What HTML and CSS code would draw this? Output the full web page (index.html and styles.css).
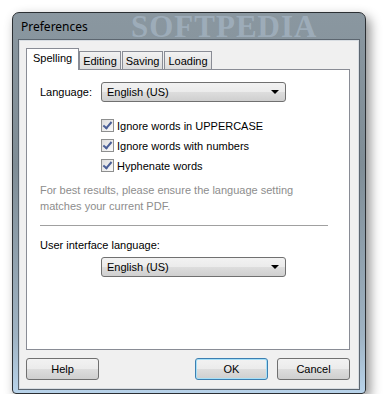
FILE: index.html
```html
<!DOCTYPE html>
<html lang="en">
<head>
    <meta charset="UTF-8">
    <title>Preferences</title>
    <link rel="stylesheet" href="styles.css">
</head>
<body>
    <div class="window">
        <div class="titlebar">
            <span class="title">Preferences</span>
            <span class="watermark">SOFTPEDIA</span>
        </div>
        <div class="client">
            <div class="tabs">
                <div class="tab active">Spelling</div>
                <div class="tab">Editing</div>
                <div class="tab">Saving</div>
                <div class="tab">Loading</div>
            </div>
            <div class="panel">
                <div class="row">
                    <label class="label">Language:</label>
                    <div class="select">English (US)<span class="arrow"></span></div>
                </div>
                <div class="checks">
                    <label class="check"><span class="box"></span>Ignore words in UPPERCASE</label>
                    <label class="check"><span class="box"></span>Ignore words with numbers</label>
                    <label class="check"><span class="box"></span>Hyphenate words</label>
                </div>
                <p class="hint">For best results, please ensure the language setting matches your current PDF.</p>
                <hr class="sep">
                <div class="label2">User interface language:</div>
                <div class="select indent">English (US)<span class="arrow"></span></div>
            </div>
            <div class="buttons">
                <button class="btn">Help</button>
                <span class="spacer"></span>
                <button class="btn default">OK</button>
                <button class="btn">Cancel</button>
            </div>
        </div>
    </div>
</body>
</html>
```

FILE: styles.css
```css
body {
    margin: 0;
    background: #fff;
    font-family: "Liberation Sans", Arial, sans-serif;
    font-size: 11px;
    color: #000;
}
.window {
    margin: 12px 0 0 12px;
    width: 340px;
    height: 376px;
    border: 1px solid #2b2f33;
    border-radius: 7px 7px 4px 4px;
    background: linear-gradient(to bottom, #8a97a0 0%, #7f8d96 40%, #9fb3c3 85%, #b8d3ea 100%);
    box-shadow: 4px 5px 12px rgba(0, 0, 0, 0.45);
    padding: 0 6px 4px 6px;
    display: flex;
    flex-direction: column;
}
.titlebar {
    height: 27px;
    flex-shrink: 0;
    display: flex;
    align-items: center;
    position: relative;
}
.title {
    font-family: "Noto Sans", "DejaVu Sans", sans-serif;
    font-size: 12px;
    padding-left: 2px;
    color: #000;
}
.watermark {
    position: absolute;
    left: 112px;
    top: -4px;
    font-family: "Liberation Serif", serif;
    font-weight: bold;
    font-size: 31px;
    letter-spacing: 1px;
    color: rgba(175, 192, 208, 0.55);
}
.client {
    flex: 1;
    background: #f0f0f0;
    border: 1px solid #d8dde2;
    outline: 1px solid #5c6670;
    padding: 7px 8px 7px 6px;
    display: flex;
    flex-direction: column;
}
.tabs {
    display: flex;
    align-items: flex-end;
    height: 21px;
    flex-shrink: 0;
}
.tab {
    height: 17px;
    padding: 0 3px;
    line-height: 18px;
    border: 1px solid #898c95;
    border-bottom: none;
    background: linear-gradient(to bottom, #f2f2f2, #dcdcdc);
    margin-right: 1px;
}
.tab.active {
    height: 21px;
    line-height: 18px;
    padding: 0 6px;
    background: #fff;
    position: relative;
    top: 1px;
    margin-right: 0;
}
.panel {
    box-sizing: border-box;
    height: 281px;
    flex-shrink: 0;
    border: 1px solid #898c95;
    background: #fff;
    padding: 12px 21px 0 13px;
}
.row {
    display: flex;
    align-items: center;
}
.label {
    width: 61px;
}
.select {
    width: 178px;
    height: 18px;
    border: 1px solid #707070;
    border-radius: 3px;
    background: linear-gradient(to bottom, #f2f2f2 0%, #ebebeb 50%, #dddddd 51%, #cfcfcf 100%);
    line-height: 19px;
    padding-left: 5px;
    position: relative;
}
.arrow {
    position: absolute;
    right: 6px;
    top: 7px;
    border-left: 4px solid transparent;
    border-right: 4px solid transparent;
    border-top: 4px solid #000;
}
.checks {
    margin: 17px 0 0 61px;
    display: flex;
    flex-direction: column;
    gap: 7px;
}
.check {
    display: flex;
    align-items: center;
    height: 13px;
}
.box {
    width: 11px;
    height: 11px;
    border: 1px solid #8e8f8f;
    background: linear-gradient(135deg, #dcdcdc, #fbfbfb);
    margin-right: 3px;
    position: relative;
}
.box::after {
    content: "";
    position: absolute;
    left: 3px;
    top: 0;
    width: 3px;
    height: 7px;
    border: solid #4a5f97;
    border-width: 0 2px 2px 0;
    transform: rotate(40deg);
}
.hint {
    margin: 10px 0 0 0;
    color: #8d8d8d;
    line-height: 16px;
    width: 270px;
}
.sep {
    margin: 11px 0 0 0;
    border: none;
    border-top: 1px solid #a0a0a0;
}
.label2 {
    margin-top: 13px;
}
.select.indent {
    margin: 6px 0 0 61px;
}
.buttons {
    display: flex;
    gap: 9px;
    margin-top: 8px;
}
.spacer {
    flex: 1;
}
.btn {
    width: 73px;
    height: 22px;
    font-family: inherit;
    font-size: 11px;
    border: 1px solid #707070;
    border-radius: 3px;
    background: linear-gradient(to bottom, #f2f2f2 0%, #ebebeb 50%, #dddddd 51%, #cfcfcf 100%);
    padding: 0;
}
.btn.default {
    border-color: #3c7fb1;
    box-shadow: inset 0 0 0 1px #a6e0f8;
}
```
